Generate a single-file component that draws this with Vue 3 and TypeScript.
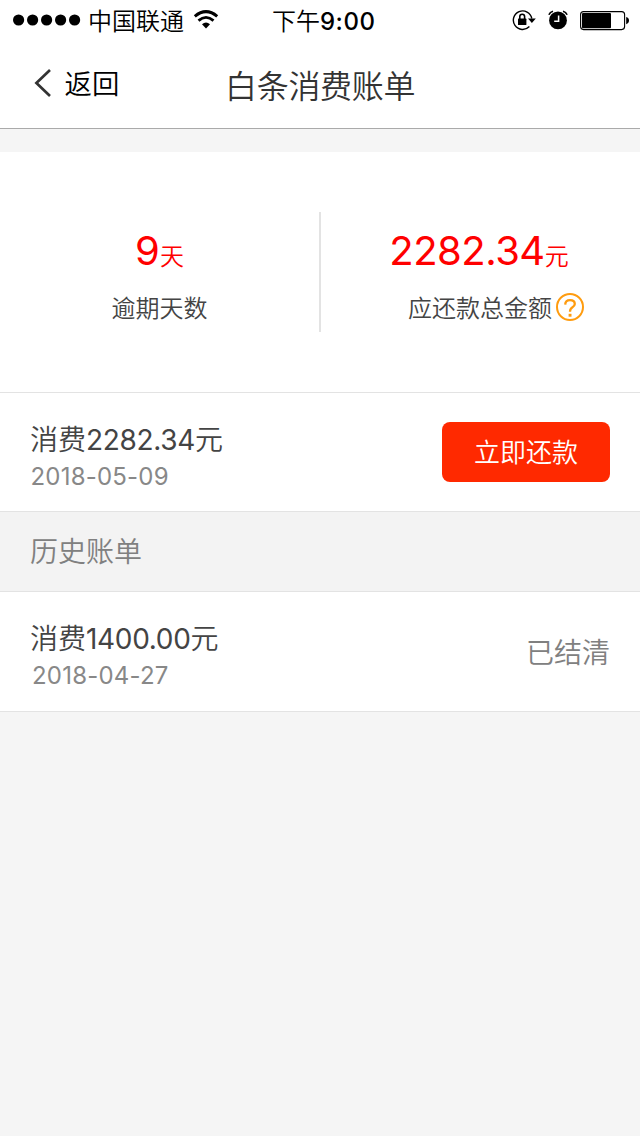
<script setup lang="ts">
const signalDots: number[] = [1, 2, 3, 4, 5]
</script>

<template>
  <div class="page">
    <header class="status">
      <div class="carrier">
        <svg class="dots" width="68" height="12" viewBox="0 0 68 12">
          <circle v-for="n in signalDots" :key="n" :cx="n * 14 - 8.4" cy="6" r="5.6" />
        </svg>
        <span class="carrier-name">中国联通</span>
        <svg class="wifi" width="26" height="20" viewBox="0 0 26 20">
          <path d="M1.8 6.3 Q13 -3 24.2 6.3" fill="none" stroke="#000" stroke-width="3" />
          <path d="M5.5 10.6 Q13 4.2 20.5 10.6" fill="none" stroke="#000" stroke-width="2.8" />
          <path d="M9 14.2 Q13 11 17 14.2 L13 18.4 Z" />
        </svg>
      </div>
      <span class="time">下午<b>9:00</b></span>
      <div class="indicators">
        <svg width="25" height="22" viewBox="0 0 25 22">
          <path d="M17.4 17.6 A9.3 9.3 0 1 1 19.8 9.5" fill="none" stroke="#000" stroke-width="1.4" />
          <path d="M16 9.6 H23.8 L19.9 14 Z" />
          <rect x="6" y="9.6" width="8.4" height="6.4" rx=".6" />
          <path d="M7.8 10 V7.6 a2.4 2.4 0 0 1 4.8 0 V10" fill="none" stroke="#000" stroke-width="1.6" />
        </svg>
        <svg class="alarm" width="20" height="20" viewBox="0 0 20 20">
          <circle cx="10" cy="10.4" r="8.9" />
          <path d="M.9 4.8 A6 6 0 0 1 5 1.2 M15 1.2 A6 6 0 0 1 19.1 4.8" fill="none" stroke="#000" stroke-width="1.7" />
          <path d="M10.6 5.6 V11.3 H6.2" fill="none" stroke="#fff" stroke-width="1.5" />
        </svg>
        <svg class="battery" width="50" height="20" viewBox="0 0 50 20">
          <rect x=".6" y=".6" width="44" height="18" rx="3" fill="none" stroke="#000" stroke-width="1.1" />
          <rect x="2" y="2" width="29" height="15.2" rx="1" />
          <path d="M46.2 6 Q49 6.8 49 9.6 T46.2 13.2 Z" />
        </svg>
      </div>
    </header>

    <nav class="nav">
      <a class="back">
        <svg width="18" height="30" viewBox="0 0 18 30">
          <path d="M16 2 L2.4 15 L16 28" fill="none" stroke="#333" stroke-width="2.7" />
        </svg>
        <span>返回</span>
      </a>
      <h1>白条消费账单</h1>
    </nav>

    <section class="summary">
      <div class="stat">
        <p class="value"><span>9</span><small>天</small></p>
        <p class="label">逾期天数</p>
      </div>
      <div class="stat amount">
        <p class="value"><span>2282.34</span><small>元</small></p>
        <p class="label">
          应还款总金额
          <svg width="28" height="28" viewBox="0 0 28 28">
            <circle cx="14" cy="14" r="13" fill="none" stroke="#ff9c0f" stroke-width="2" />
            <path d="M9.2 11.6 Q9.3 7.1 14 7.1 Q18.8 7.1 18.8 11 Q18.8 12.9 16.2 14.5 Q14 15.8 14 18.8" fill="none" stroke="#ff9c0f" stroke-width="2.3" />
            <rect x="12.6" y="20.8" width="2.9" height="2.9" fill="#ff9c0f" />
          </svg>
        </p>
      </div>
    </section>

    <section class="bill">
      <div>
        <p class="title">消费<span>2282.34</span>元</p>
        <p class="date">2018-05-09</p>
      </div>
      <button class="pay">立即还款</button>
    </section>

    <h2 class="history">历史账单</h2>

    <section class="bill settled">
      <div>
        <p class="title">消费<span>1400.00</span>元</p>
        <p class="date">2018-04-27</p>
      </div>
      <span class="state">已结清</span>
    </section>
  </div>
</template>

<style>
body {
  margin: 0;
  background: #f5f5f5;
}
</style>

<style scoped>
* {
  box-sizing: border-box;
}
.page {
  width: 640px;
  height: 1136px;
  background: #f5f5f5;
  color: #444;
  font-family: Inter, "Noto Sans CJK SC DemiLight", "Noto Sans CJK SC", sans-serif;
  font-weight: 350;
  overflow: hidden;
}
p, h1, h2 {
  margin: 0;
  font-weight: inherit;
}
svg {
  display: block;
  flex: none;
}
.status {
  height: 40px;
  display: grid;
  grid-template-columns: 272px 1fr 128px;
  background: #fff;
  color: #000;
  font-size: 24px;
  line-height: 42px;
  white-space: nowrap;
}
.carrier {
  display: flex;
  padding-left: 13px;
}
.dots {
  margin-top: 14px;
}
.carrier-name {
  margin-left: 7px;
  line-height: 43px;
}
.wifi {
  margin: 10px 0 0 9px;
}
.time {
  font-weight: 400;
  line-height: 43px;
}
.time b {
  font-weight: 500;
  letter-spacing: 0.5px;
}
.indicators {
  display: flex;
}
.indicators svg {
  margin-top: 9px;
}
.indicators .alarm {
  margin: 10px 0 0 11px;
}
.indicators .battery {
  margin: 11px 0 0 12px;
}
.nav {
  height: 89px;
  display: grid;
  grid-template-columns: 225px 1fr;
  background: #fff;
  border-bottom: 1px solid #aaa;
}
.back {
  display: flex;
  padding-left: 34px;
  color: #000;
  font-size: 27.4px;
  line-height: 88px;
}
.back svg {
  margin: 28px 12.5px 0 0;
}
h1 {
  font-size: 32px;
  line-height: 93px;
  letter-spacing: -0.3px;
  color: #333;
}
.summary {
  height: 241px;
  margin-top: 23px;
  padding: 60px 0;
  display: grid;
  grid-template-columns: 321px 1fr;
  background: #fff;
  border-bottom: 1px solid #e3e3e3;
}
.stat {
  height: 120px;
  padding-top: 9px;
  border-right: 2px solid #e3e3e3;
  text-align: center;
}
.amount {
  border-right: 0;
  padding-right: 3px;
}
.value {
  font-size: 40px;
  line-height: 59px;
  color: #f00;
}
.value span {
  font-weight: 400;
}
.amount .value span {
  letter-spacing: -0.5px;
}
.value small {
  font-size: 24px;
}
.label {
  font-size: 24px;
  line-height: 46px;
}
.amount .label {
  display: flex;
  justify-content: center;
  padding-left: 34px;
}
.amount .label svg {
  margin: 13px 0 0 4px;
  margin-top: 7px;
}
.bill {
  height: 119px;
  padding: 29px 30px 0;
  display: flex;
  justify-content: space-between;
  background: #fff;
  border-bottom: 1px solid #e3e3e3;
}
.title {
  font-size: 28px;
  line-height: 36px;
}
.title span {
  font-weight: 400;
  letter-spacing: -0.33px;
}
.date {
  padding-left: 0.5px;
  font-size: 24px;
  font-weight: 400;
  line-height: 37px;
  letter-spacing: 0.2px;
  color: #888;
}
.pay {
  width: 168px;
  height: 60px;
  padding: 2px 0 0;
  border: 0;
  border-radius: 8px;
  background: #ff2900;
  color: #fff;
  font: inherit;
  font-size: 26px;
  line-height: 58px;
}
.history {
  height: 80px;
  padding-left: 30px;
  background: #f3f3f3;
  border-bottom: 1px solid #e3e3e3;
  color: #808080;
  font-size: 28px;
  line-height: 80px;
}
.settled {
  height: 120px;
}
.settled .date {
  padding-left: 2px;
}
.state {
  font-size: 28px;
  line-height: 64px;
  color: #808080;
}
</style>
